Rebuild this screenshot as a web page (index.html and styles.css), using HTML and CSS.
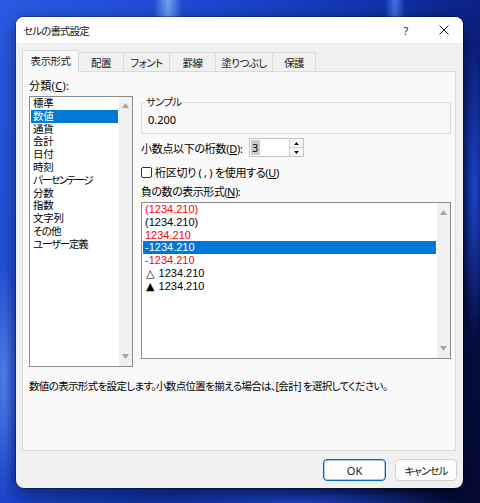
FILE: index.html
```html
<!DOCTYPE html>
<html lang="ja">
<head>
<meta charset="utf-8">
<title>セルの書式設定</title>
<link rel="stylesheet" href="styles.css">
</head>
<body>
<div class="dialog">
  <div class="titlebar">
    <span class="title">セルの書式設定</span>
    <span class="help">?</span>
    <span class="close"><svg width="10" height="10" viewBox="0 0 10 10"><path d="M0.5 0.5 L9.5 9.5 M9.5 0.5 L0.5 9.5" stroke="#1a1a1a" stroke-width="1" fill="none"/></svg></span>
  </div>
  <div class="content">
    <div class="tabs">
      <div class="tab active t1">表示形式</div>
      <div class="tab t2">配置</div>
      <div class="tab t3">フォント</div>
      <div class="tab t4">罫線</div>
      <div class="tab t5">塗りつぶし</div>
      <div class="tab t6">保護</div>
    </div>
    <div class="panel">
      <div class="cols">
        <div class="leftcol">
          <div class="label catlabel">分類(<u>C</u>):</div>
          <div class="listbox catlist">
            <ul class="items">
              <li>標準</li>
              <li class="sel">数値</li>
              <li>通貨</li>
              <li>会計</li>
              <li>日付</li>
              <li>時刻</li>
              <li class="k1">パーセンテージ</li>
              <li>分数</li>
              <li>指数</li>
              <li>文字列</li>
              <li class="k3">その他</li>
              <li class="k2">ユーザー定義</li>
            </ul>
            <div class="vscroll">
              <svg width="7" height="5" viewBox="0 0 7 5"><path d="M3.5 0 L7 5 L0 5 Z" fill="#a6a6a6"/></svg>
              <svg width="7" height="5" viewBox="0 0 7 5"><path d="M0 0 L7 0 L3.5 5 Z" fill="#a6a6a6"/></svg>
            </div>
          </div>
        </div>
        <div class="rightcol">
          <fieldset class="sample">
            <legend>サンプル</legend>
            <div class="sample-val">0.200</div>
          </fieldset>
          <div class="decrow">
            <span class="declabel">小数点以下の桁数(<u>D</u>):</span>
            <div class="spinbox">
              <span class="spinval"><span class="selval">3</span></span>
              <span class="spinbtns">
                <span class="spinbtn"><svg width="5" height="3" viewBox="0 0 5 3"><path d="M2.5 0 L5 3 L0 3 Z" fill="#1a1a1a"/></svg></span>
                <span class="spinbtn"><svg width="5" height="3" viewBox="0 0 5 3"><path d="M0 0 L5 0 L2.5 3 Z" fill="#1a1a1a"/></svg></span>
              </span>
            </div>
          </div>
          <div class="chkrow">
            <span class="checkbox"></span>
            <span class="chklabel">桁区切り ( , ) を使用する(<u>U</u>)</span>
          </div>
          <div class="label neglabel">負の数の表示形式(<u>N</u>):</div>
          <div class="listbox neglist">
            <ul class="items">
              <li class="red">(1234.210)</li>
              <li>(1234.210)</li>
              <li class="red">1234.210</li>
              <li class="sel">-1234.210</li>
              <li class="red">-1234.210</li>
              <li><span class="tri">△</span> 1234.210</li>
              <li><span class="tri">▲</span> 1234.210</li>
            </ul>
            <div class="vscroll">
              <svg width="7" height="5" viewBox="0 0 7 5"><path d="M3.5 0 L7 5 L0 5 Z" fill="#a6a6a6"/></svg>
              <svg width="7" height="5" viewBox="0 0 7 5"><path d="M0 0 L7 0 L3.5 5 Z" fill="#a6a6a6"/></svg>
            </div>
          </div>
        </div>
      </div>
      <div class="desc">数値の表示形式を設定します。小数点位置を揃える場合は、[会計] を選択してください。</div>
    </div>
    <div class="footer">
      <button class="btn ok">OK</button>
      <button class="btn cancel">キャンセル</button>
    </div>
  </div>
</div>
</body>
</html>
```
FILE: styles.css
```css
* { box-sizing: border-box; }
html, body { margin: 0; }
body {
  width: 480px;
  height: 503px;
  overflow: hidden;
  padding: 17px 0 0 16px;
  font-family: "Noto Sans", "Noto Sans CJK JP", sans-serif;
  font-size: 11px;
  color: #000;
  font-feature-settings: "palt";
  background:
    radial-gradient(ellipse 14px 120px at 168px 0px, rgba(140,190,255,0.75), transparent),
    radial-gradient(ellipse 10px 90px at 395px 0px, rgba(90,140,255,0.7), transparent),
    radial-gradient(ellipse 12px 150px at 474px 190px, rgba(40,90,255,0.75), transparent),
    radial-gradient(ellipse 14px 120px at 4px 380px, rgba(120,170,255,0.6), transparent),
    radial-gradient(ellipse 160px 20px at 300px 503px, rgba(40,90,255,0.7), transparent),
    linear-gradient(115deg, #2b5be2 0%, #1c47d0 30%, #1236b0 50%, #0b2182 68%, #060f48 85%, #040a30 100%);
}
.dialog {
  width: 447px;
  height: 471px;
  background: #f0f0f0;
  border-radius: 8px;
  overflow: hidden;
  box-shadow: 0 0 0 1px rgba(0,0,0,0.28), 0 6px 20px rgba(0,0,0,0.45);
  display: flex;
  flex-direction: column;
}
.titlebar {
  height: 26px;
  flex: none;
  background: #ffffff;
  display: flex;
  align-items: center;
  padding-left: 7px;
  padding-right: 9px;
}
.title { flex: 1; color: #1a1a1a; font-size: 10.5px; letter-spacing: -0.85px; }
.help {
  width: 20px;
  text-align: center;
  font-size: 11px;
  color: #1a1a1a;
  margin-right: 18px;
}
.close { width: 20px; display: flex; justify-content: center; align-items: center; }
.content {
  flex: 1;
  padding: 7px 0 0 6px;
  display: flex;
  flex-direction: column;
}
.tabs {
  height: 21px;
  display: flex;
  align-items: flex-end;
}
.tab {
  height: 19px;
  border: 1px solid #dadada;
  border-bottom: none;
  background: #f0f0f0;
  margin-left: -1px;
  display: flex;
  align-items: center;
  justify-content: center;
  color: #1a1a1a;
  font-size: 10.5px;
  letter-spacing: -0.5px;
}
.tab.active {
  height: 22px;
  margin-left: 0;
  margin-bottom: -1px;
  background: #f9f9f9;
  position: relative;
  z-index: 1;
  padding-bottom: 2px;
}
.t1 { width: 57px; }
.t2 { width: 46px; }
.t3 { width: 47px; }
.t4 { width: 47px; }
.t5 { width: 58px; }
.t6 { width: 44px; }
.panel {
  width: 434px;
  height: 380px;
  border: 1px solid #dadada;
  background: #f9f9f9;
  padding: 7px 0 0 6px;
}
.cols {
  display: grid;
  grid-template-columns: 104px 310px;
  column-gap: 8px;
}
.label { line-height: 14px; height: 14px; letter-spacing: -0.3px; }
.catlabel { letter-spacing: 0.3px; }
.leftcol .label { margin-bottom: 3px; }
.listbox {
  border: 1px solid #8c8c8c;
  background: #fff;
  display: flex;
}
.catlist { height: 271px; }
.neglist { height: 157px; margin-top: 3px; }
.items {
  list-style: none;
  margin: 0 1px;
  padding: 0;
  flex: 1;
  font-family: "Liberation Sans", "Noto Sans CJK JP", sans-serif;
}
.items li {
  height: 12.8px;
  line-height: 12.8px;
  padding-left: 2px;
  white-space: nowrap;
}
.catlist .items li { font-size: 10.5px; letter-spacing: -0.3px; }
.catlist .items li.k1 { letter-spacing: -1.5px; }
.catlist .items li.k2 { letter-spacing: -1.2px; }
.catlist .items li.k3 { letter-spacing: -0.8px; }
.items li.sel { background: #0078d7; color: #fff; }
.items li.red { color: #ff0000; }
.tri {
  font-family: "DejaVu Sans", sans-serif;
  font-size: 11px;
  margin-left: 1px;
  margin-right: 1px;
}
.vscroll {
  width: 13px;
  background: #f0f0f0;
  display: flex;
  flex-direction: column;
  justify-content: space-between;
  align-items: center;
  padding: 6px 0 7px;
}
.neglist .vscroll { padding: 7px 0 7px; }
.rightcol { padding-top: 17px; }
.sample {
  margin: 0;
  height: 38px;
  border: 1px solid #dcdcdc;
  padding: 0 6px;
  min-width: 0;
}
.sample legend {
  padding: 0 1px;
  margin-left: -3px;
  line-height: 12px;
  font-size: 10.5px;
  letter-spacing: -0.8px;
  color: #1a1a1a;
}
.sample-val { margin-top: 5px; line-height: 14px; }
.decrow {
  margin-top: 4px;
  height: 19px;
  display: flex;
  align-items: center;
}
.declabel { width: 108px; letter-spacing: -0.3px; }
.spinbox {
  width: 55px;
  height: 19px;
  border: 1px solid #c4c4c4;
  background: #fff;
  display: flex;
}
.spinval {
  flex: 1;
  padding: 1px 0 0 1px;
  line-height: 15px;
}
.selval { background: #cccccc; padding: 0 2px 0 1px; display: inline-block; line-height: 15px; }
.spinbtns {
  width: 14px;
  display: flex;
  flex-direction: column;
  border-left: 1px solid #d0d0d0;
}
.spinbtn {
  flex: 1;
  display: flex;
  align-items: center;
  justify-content: center;
  background: #f6f6f6;
}
.spinbtn + .spinbtn { border-top: 1px solid #d0d0d0; }
.chkrow {
  margin-top: 8px;
  height: 14px;
  display: flex;
  align-items: center;
}
.checkbox {
  width: 11px;
  height: 11px;
  border: 1px solid #333;
  border-radius: 2px;
  background: #fff;
  margin-right: 3px;
}
.chklabel { letter-spacing: -0.3px; }
.neglabel { margin-top: 6px; letter-spacing: -0.5px; }
.desc {
  margin-top: 12px;
  line-height: 14px;
  font-size: 10.5px;
  letter-spacing: -0.65px;
}
.footer {
  display: flex;
  justify-content: flex-end;
  gap: 9px;
  padding: 8px 6px 0 0;
}
.btn {
  height: 22px;
  width: 62px;
  font-family: inherit;
  font-size: 11px;
  font-feature-settings: "palt";
  background: #fdfdfd;
  border: 1px solid #d0d0d0;
  border-radius: 4px;
  color: #1a1a1a;
  padding: 0;
}
.btn.cancel { font-size: 10.5px; letter-spacing: -1px; }
.btn.ok {
  width: 63px;
  border: 1px solid #0067c0;
  box-shadow: inset 0 0 0 1px rgba(0,103,192,0.35);
}
```
